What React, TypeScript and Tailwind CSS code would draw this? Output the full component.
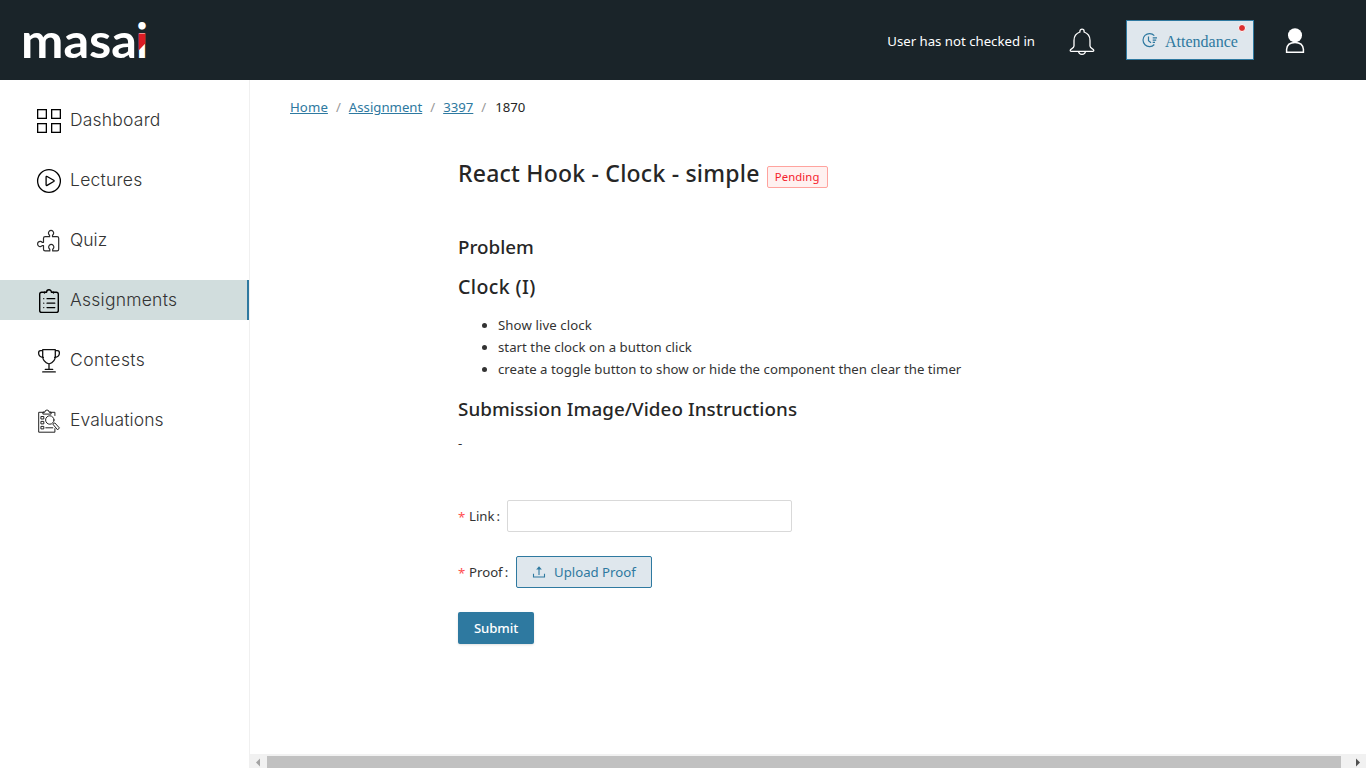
import React from "react";

const nav = [
  { label: "Dashboard", icon: "grid", track: "tracking-[0.2px]" },
  { label: "Lectures", icon: "play", track: "tracking-[0.25px]" },
  { label: "Quiz", icon: "puzzle", track: "tracking-normal" },
  { label: "Assignments", icon: "list", active: true, track: "tracking-[0.24px]" },
  { label: "Contests", icon: "trophy", track: "tracking-[0.45px]" },
  { label: "Evaluations", icon: "search", track: "tracking-[0.1px]" },
];

function NavIcon({ name }: { name: string }) {
  return (
    <svg width="26" height="26" viewBox="0 0 26 26" fill="none" stroke="#111" strokeWidth="1.3" strokeLinejoin="round" strokeLinecap="round" className="shrink-0">
      {name === "grid" && (
        <g stroke="#000" strokeLinejoin="miter">
          <rect x="1.65" y="1.65" width="8.7" height="8.7" />
          <rect x="15.65" y="1.65" width="8.7" height="8.7" />
          <rect x="1.65" y="15.65" width="8.7" height="8.7" />
          <rect x="15.65" y="15.65" width="8.7" height="8.7" />
        </g>
      )}
      {name === "play" && (
        <g stroke="#000">
          <circle cx="13" cy="13" r="11.4" />
          <path d="M10.1 9.1q0-1.1 1-.6l6.6 3.8q.9.6 0 1.200l-6.600 3.900q-1 .5-1-.6Z" />
        </g>
      )}
      {name === "puzzle" && (
        <g strokeWidth="1.2" stroke="#2a2a2a">
          <path d="M7.500 13.300V10.300Q7.500 8.700 9.100 8.700h4.500V7.200a2.600 2.600 0 1 1 2.900 0v1.500h4.600q1.600 0 1.600 1.600v11q0 1.600-1.600 1.600h-4.400v-1.700a2.600 2.600 0 1 0-2.900 0v1.700H9.100q-1.600 0-1.600-1.600v-3.700H6.200a2.600 2.600 0 1 1 0-3.300h1.300Z" />
        </g>
      )}
      {name === "list" && (
        <g strokeWidth="1.4" stroke="#000">
          <path d="M9 4.200H5.700Q3.700 4.200 3.700 6.200v16.200q0 2 2 2h14.600q2 0 2-2V6.200q0-2-2-2H17" />
          <path d="M8.500 5V4.200h2.100a2.400 2.400 0 0 1 4.800 0h2.100V5" />
          <path strokeWidth="1.2" d="M11 10.700h7.800M11 15.200h7.800M11 19.600h7.800M7.700 10.700h.1M7.700 15.200h.1M7.700 19.600h.1" />
        </g>
      )}
      {name === "trophy" && (
        <g strokeWidth="1.3">
          <path d="M6.700 1.700h12.600v6.500q0 5.500-6.300 7.800Q6.700 13.700 6.700 8.200ZM6.700 2.600H4.500Q2.600 2.600 2.600 5q0 4 4.800 4.500M19.300 2.600h2.200q1.900 0 1.900 2.400 0 4-4.800 4.500M13 16v5.300M9.300 21.400h7.400M6.700 23.900h12.600" />
        </g>
      )}
      {name === "search" && (
        <g strokeWidth="1" stroke="#222">
          <path d="M8 4.300H2.700v19.900h16.200v-3.500M18.900 7.500V4.300h-5M6.900 5.700V4.100h2a2 2 0 0 1 4.200 0h2v1.600Z" />
          <path d="M5.300 8.500h2.500V11H5.300ZM5.300 13.400h2.500v2.500H5.300ZM5.300 18.400h2.500v2.500H5.300ZM9.800 19.800h7M17.200 16l1.600-1.100 4.600 5-1.500 1.700Z" />
          <circle cx="13.800" cy="12" r="4.200" />
        </g>
      )}
    </svg>
  );
}

export default function App() {
  return (
    <div className="flex h-[768px] w-[1366px] flex-col overflow-hidden bg-white font-['Noto_Sans','Open_Sans',sans-serif] text-[13.200px] text-[#333]">
      <header className="flex h-20 shrink-0 items-center bg-[#1a2429] text-white">
        <svg width="180" height="80" viewBox="0 0 180 80">
          <text x="21" y="58" textLength="116" lengthAdjust="spacingAndGlyphs" className="font-['Lato',sans-serif] text-[47px] font-bold" fill="#fff">masa</text>
          <text x="136" y="58" className="font-['Lato',sans-serif] text-[47px] font-bold" fill="#fff">i</text>
          <path d="M138.600 33.500h6.700V43.500l-6.700 7Z" fill="#dc1c24" />
        </svg>
        <div className="ml-auto flex items-center pr-[61px]">
          <span className="pt-[3px]">User has not checked in</span>
          <svg width="26" height="28" viewBox="0 0 26 28" fill="none" stroke="#fff" strokeWidth="1.300" className="relative top-[2px] ml-[34px]">
            <path d="M10.900 4V3.300a2.100 2.100 0 0 1 4.200 0V4q5.900 2 5.900 8.500v5.600q0 1.500 2.400 2.700 1.400.7 1.400 1.700 0 .800-.9.800H2.100q-.9 0-.9-.8 0-1 1.400-1.700Q5 19.600 5 18.100v-5.600Q5 6 10.900 4ZM9.500 23.500q.5 2.800 3.500 2.800t3.500-2.800" />
          </svg>
          <button className="relative ml-[31px] flex h-10 w-32 items-center border border-[#2e79a0] bg-[#dfe7ed] pl-[14px] text-[#2e79a0]">
            <svg width="17" height="16" viewBox="0 0 17 16" fill="none" stroke="currentColor" strokeWidth="1.200">
              <path d="M13.300 3.700A6.500 6.500 0 1 0 13.300 12.500M7.500 4.500v4.200l2.500 2M11.700 5.800h4.300M11.700 8.100h3.500M11.700 10.400h2.300" />
            </svg>
            <span className="ml-[7px] pt-[3px] font-['Liberation_Serif',serif] text-base">Attendance</span>
            <i className="absolute right-[7px] top-[3px] size-[8px] rounded-full border border-white bg-[#dc2f2f]" />
          </button>
          <svg width="20" height="28" viewBox="0 0 20 28" className="relative top-px ml-[31px]">
            <circle cx="10" cy="8.300" r="7" fill="#fff" />
            <path d="M1.600 25.300v-3Q2.200 15.500 10 15.500t8.400 6.800v3Z" fill="#1a2429" stroke="#fff" strokeWidth="1.500" />
          </svg>
        </div>
      </header>
      <div className="flex min-h-0 flex-1">
        <aside className="flex w-[250px] shrink-0 flex-col gap-5 border-r border-[#f0f0f0] pt-5">
          {nav.map((n) => (
            <a key={n.label} className={n.active ? "flex h-10 items-center border-r-2 border-[#2e79a0] bg-[#d1dddd] pl-9" : "flex h-10 items-center pl-9"}>
              <div className="pt-[2px]"><NavIcon name={n.icon} /></div>
              <span className={`ml-2 font-['Inter',sans-serif] text-[17.500px] font-light text-[#333] ${n.track}`}>{n.label}</span>
            </a>
          ))}
        </aside>
        <main className="flex min-w-0 flex-1 flex-col">
          <nav className="ml-10 mt-[17px] flex h-[22px] items-center whitespace-pre text-[#999]">
            <span className="tracking-[0.1px] text-[#2e79a0] underline">Home</span><span className="mx-2">/</span>
            <span className="text-[#2e79a0] underline">Assignment</span><span className="mx-2">/</span>
            <span className="text-[#2e79a0] underline">3397</span><span className="ml-2 mr-[9px]">/</span>
            <span className="text-[#262626]">1870</span>
          </nav>
          <section className="ml-[208px] flex flex-col items-start">
            <div className="mt-[38px] flex h-8 items-center">
              <h1 className="pt-px text-[23px] font-medium tracking-[0.22px] text-[#262626]">React Hook - Clock - simple</h1>
              <span className="ml-[7px] mt-2 flex h-[22px] w-[61px] items-center justify-center rounded-[2px] border border-[#ffa39e] bg-[#fff1f0] text-[11.300px] text-[#f5222d]"><span className="pt-px tracking-[0.1px]">Pending</span></span>
            </div>
            <h2 className="mt-11 text-[18.800px] font-medium leading-7 text-[#262626]">Problem</h2>
            <h2 className="mt-3 text-[19.500px] font-medium leading-7 tracking-[0.4px] text-[#262626]">Clock (I)</h2>
            <ul className="mt-[13px] list-disc pl-10 leading-[22px]">
              <li><span className="tracking-[0.1px]">Show live clock</span></li>
              <li><span className="tracking-[0.04px]">start the clock on a button click</span></li>
              <li><span className="tracking-[0.02px]">create a toggle button to show or hide the component then clear the timer</span></li>
            </ul>
            <h2 className="mt-[15px] text-[18.800px] font-medium leading-7 tracking-[0.07px] text-[#262626]">Submission Image/Video Instructions</h2>
            <p className="mt-[9px] leading-[22px]">-</p>
            <div className="mt-[46px] flex h-8 items-center">
              <span className="w-[11px] pt-[3px] text-[#ff4d4f]">*</span><span className="w-[31px] pt-px">Link<span className="ml-[2px]">:</span></span>
              <input className="ml-[7px] h-8 w-[285px] rounded-[2px] border border-[#d9d9d9]" />
            </div>
            <div className="mt-6 flex h-8 items-center">
              <span className="w-[11px] pt-[3px] text-[#ff4d4f]">*</span><span className="w-10 pt-px">Proof<span className="ml-[2px]">:</span></span>
              <button className="ml-[7px] flex h-8 w-[136px] items-center rounded-[2px] border border-[#2e79a0] bg-[#dfe7ed] pl-[15px] text-[#2e79a0]">
                <svg width="14" height="14" viewBox="0 0 14 14" fill="none" stroke="currentColor" strokeWidth="1.100"><path d="M1.500 8.800v3.200h11V8.800M7 10V3M5.300 4 7 2l1.700 2Z" /></svg>
                <span className="ml-2 pt-px">Upload Proof</span>
              </button>
            </div>
            <button className="mt-6 flex h-8 w-[76px] items-center justify-center rounded-[2px] bg-[#2e79a0] font-medium text-white shadow-sm"><span className="pt-px tracking-[-0.1px]">Submit</span></button>
          </section>
          <div className="mt-auto flex h-[14px] items-end bg-[#f1f1f1]">
            <svg width="17" height="14" viewBox="0 0 17 14"><path d="M6 8.500 10 4.500v8Z" fill="#a3a3a3" /></svg>
            <div className="h-3 flex-1 bg-[#c1c1c1]" />
            <svg width="25" height="14" viewBox="0 0 25 14"><path d="M19 8.500 15 4.500v8Z" fill="#505050" /></svg>
          </div>
        </main>
      </div>
    </div>
  );
}
